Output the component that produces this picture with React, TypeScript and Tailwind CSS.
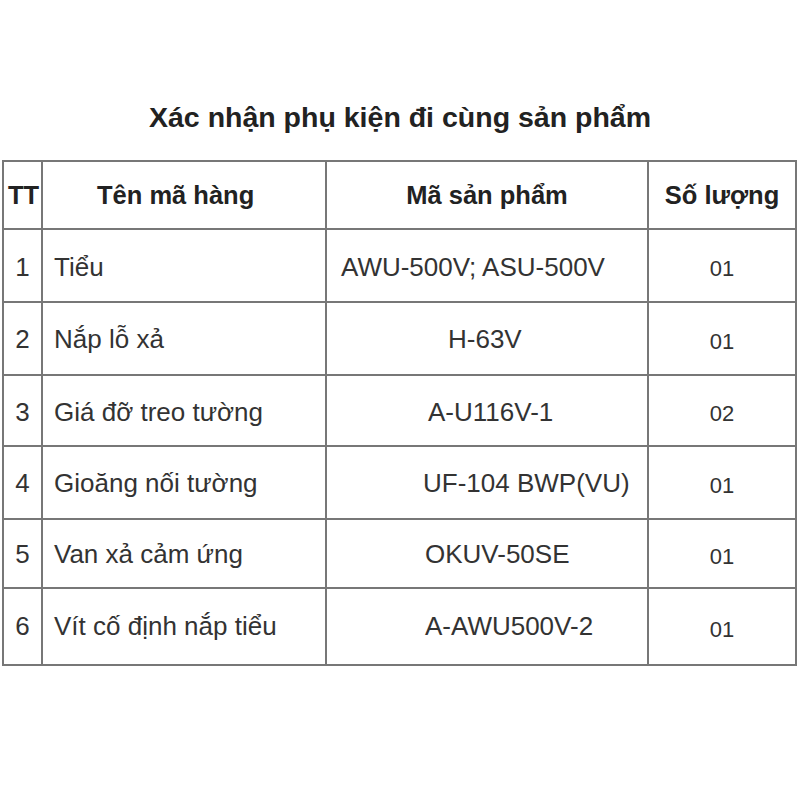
import React from 'react';

type Row = {
  tt: string;
  name: string;
  code: string;
  codeIndent: string;
  qty: string;
  height: string;
  shift: string;
};

// Ma san pham column is not centred in the original, each row has its own indent
const rows: Row[] = [
  { tt: '1', name: 'Tiểu', code: 'AWU-500V; ASU-500V', codeIndent: 'pl-[14px]', qty: '01', height: 'h-[73px]', shift: 'pt-[4px]' },
  { tt: '2', name: 'Nắp lỗ xả', code: 'H-63V', codeIndent: 'pl-[121px]', qty: '01', height: 'h-[73px]', shift: 'pt-[2px]' },
  { tt: '3', name: 'Giá đỡ treo tường', code: 'A-U116V-1', codeIndent: 'pl-[101px]', qty: '02', height: 'h-[71px]', shift: 'pt-[4px]' },
  { tt: '4', name: 'Gioăng nối tường', code: 'UF-104 BWP(VU)', codeIndent: 'pl-[96px]', qty: '01', height: 'h-[73px]', shift: 'pt-[1px]' },
  { tt: '5', name: 'Van xả cảm ứng', code: 'OKUV-50SE', codeIndent: 'pl-[98px]', qty: '01', height: 'h-[69px]', shift: 'pt-[1px]' },
  { tt: '6', name: 'Vít cố định nắp tiểu', code: 'A-AWU500V-2', codeIndent: 'pl-[98px]', qty: '01', height: 'h-[77px]', shift: '' },
];

const cols = 'grid grid-cols-[39px_284px_322px_148px]';
const cell = 'flex items-center border-r-2 border-b-2 border-[#777]';

const App: React.FC = () => {
  return (
    <div className="min-h-[800px] w-[800px] bg-white pt-[100px] font-['Liberation_Sans',Arial,sans-serif] text-[#222]">
      <h1 className="mb-[28px] h-[32px] text-center text-[28.5px] font-bold leading-[34px]">
        Xác nhận phụ kiện đi cùng sản phẩm
      </h1>

      <div className="ml-[2px] w-[795px] border-l-2 border-t-2 border-[#777]">
        <div className={`${cols} h-[68px] text-[25.5px] font-bold`}>
          <div className={`${cell} justify-center pl-[2px]`}>TT</div>
          <div className={`${cell} pl-[54px]`}>Tên mã hàng</div>
          <div className={`${cell} justify-center`}>Mã sản phẩm</div>
          <div className={`${cell} justify-center`}>Số lượng</div>
        </div>

        {rows.map((r) => (
          <div key={r.tt} className={`${cols} ${r.height} text-[26px] text-[#333]`}>
            <div className={`${cell} justify-center ${r.shift}`}>{r.tt}</div>
            <div className={`${cell} pl-[11px] ${r.shift}`}>{r.name}</div>
            <div className={`${cell} ${r.codeIndent} ${r.shift}`}>{r.code}</div>
            <div className={`${cell} justify-center pt-[6px] text-[22px]`}>{r.qty}</div>
          </div>
        ))}
      </div>
    </div>
  );
};

export default App;
